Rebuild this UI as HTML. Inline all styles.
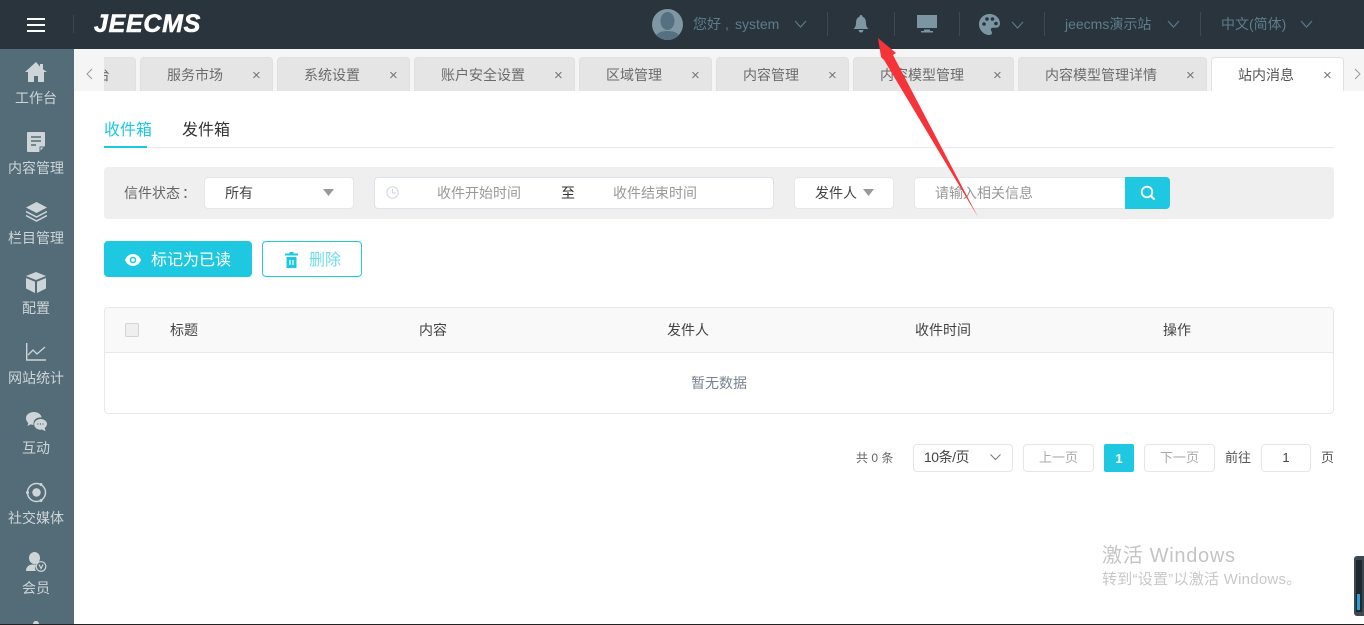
<!DOCTYPE html>
<html><head><meta charset="utf-8">
<style>
*{box-sizing:border-box;margin:0;padding:0}
html,body{width:1364px;height:625px;overflow:hidden;background:#fff}
body{font-family:"Liberation Sans","Noto Sans CJK SC",sans-serif;font-size:13px;color:#333;position:relative}
.a{position:absolute;white-space:nowrap}
.top{left:0;top:0;width:1364px;height:49px;background:#29343c}
.sep{position:absolute;top:12px;width:1px;height:24px;background:#3d4a53}
.ht{position:absolute;top:15px;line-height:18px;font-size:14px;color:#5f7d8c;white-space:nowrap}
.side{left:0;top:49px;width:74px;height:576px;background:#546c78}
.sl{position:absolute;left:0;width:72px;text-align:center;color:#cdd5d9;font-size:14px;line-height:16px;letter-spacing:0}
.tabbar{left:74px;top:49px;width:1290px;height:42px;background:#f5f5f5}
.tab{position:absolute;top:57px;height:34px;background:#e5e5e5;border:1px solid #e0e0e0;border-bottom:0;border-radius:4px 4px 0 0;font-size:14px;line-height:35px;color:#6b6b6b}
.tab span{position:absolute;left:0;top:0;white-space:nowrap}
.tab i{position:absolute;font-style:normal;top:0;font-size:15px;color:#777;line-height:36px}
.box{position:absolute;background:#fff;border:1px solid #e6e6e6;border-radius:4px}
.pl{color:#999;font-size:14px;line-height:18px}
.th{position:absolute;top:322px;font-size:14px;line-height:16px;color:#444;white-space:nowrap}
</style></head><body>
<div class="a top"></div>
<svg class="a" style="left:27px;top:17px" width="18" height="15"><path d="M0 2h18M0 8h18M0 14h18" stroke="#fff" stroke-width="2"/></svg>
<div class="a" style="left:73px;top:15px;width:1px;height:18px;background:#3a464e"></div>
<div class="a" style="left:94px;top:9px;font:italic bold 25px/30px 'Liberation Sans',sans-serif;color:#fff;letter-spacing:.7px;-webkit-text-stroke:.6px #fff">JEECMS</div>

<svg class="a" style="left:652px;top:9px" width="31" height="31"><defs><clipPath id="c"><circle cx="15.500" cy="15.500" r="15.500"/></clipPath></defs><circle cx="15.500" cy="15.500" r="15.500" fill="#7f97a3"/><g clip-path="url(#c)" fill="#557080"><ellipse cx="15.500" cy="12" rx="7" ry="9"/><path d="M3 31c0-7 6-9 12.500-9S28 24 28 31z"/></g></svg>
<div class="ht" style="left:693px">您好</div>
<div class="ht" style="left:725px">,</div>
<div class="ht" style="left:735px">system</div>
<svg class="a" style="left:794px;top:20px" width="13" height="9"><path d="M1 1l5.500 6L12 1" fill="none" stroke="#5f7d8c" stroke-width="1.100"/></svg>
<div class="sep" style="left:827px"></div>
<svg class="a" style="left:853px;top:15px" width="16" height="18"><path d="M8 0c1 0 1.500.7 1.500 1.700C12 2.500 13 5 13 8c0 3 1 4.500 2.500 6h-15C2 12.500 3 11 3 8c0-3 1-5.500 3.500-6.300C6.500.7 7 0 8 0zM5.500 15h5C10.300 16.500 9.300 17.500 8 17.500S5.700 16.500 5.500 15z" fill="#7f97a3"/></svg>
<div class="sep" style="left:894px"></div>
<svg class="a" style="left:917px;top:15px" width="21" height="18"><path d="M0 0h20v13H0zM7 14.500h6V16H7zM4 16h12v1.500H4z" fill="#7b95a2"/></svg>
<div class="sep" style="left:959px"></div>
<svg class="a" style="left:979px;top:14px" width="21" height="21"><path d="M10.500 0C4.700 0 0 4.500 0 10.200S4.700 21 10.500 21c1.800 0 2.500-1 2.500-2.200 0-1.600-1.200-2-1.200-3.300 0-1.200 1-1.800 2.200-1.800h3C19.500 13.700 21 12 21 9.500 21 4 16.300 0 10.500 0z" fill="#7b95a2"/><circle cx="5" cy="10" r="1.800" fill="#29343c"/><circle cx="8" cy="5" r="1.800" fill="#29343c"/><circle cx="13.500" cy="5" r="1.800" fill="#29343c"/><circle cx="17" cy="9.500" r="1.800" fill="#29343c"/></svg>
<svg class="a" style="left:1011px;top:21px" width="13" height="9"><path d="M1 1l5.500 6L12 1" fill="none" stroke="#5f7d8c" stroke-width="1.100"/></svg>
<div class="sep" style="left:1044px"></div>
<div class="ht" style="left:1065px">jeecms演示站</div>
<svg class="a" style="left:1167px;top:20px" width="13" height="9"><path d="M1 1l5.500 6L12 1" fill="none" stroke="#5f7d8c" stroke-width="1.100"/></svg>
<div class="sep" style="left:1200px"></div>
<div class="ht" style="left:1221px">中文(简体)</div>
<svg class="a" style="left:1300px;top:20px" width="13" height="9"><path d="M1 1l5.500 6L12 1" fill="none" stroke="#5f7d8c" stroke-width="1.100"/></svg>

<div class="a side"></div>
<svg class="a" style="left:25px;top:62px" width="22" height="20"><path d="M11 0L0 10h3v10h6v-6h4v6h6V10h3L18 7.300V2h-3v2.600z" fill="#cdd5d9"/></svg>
<div class="sl" style="top:90px">工作台</div>
<svg class="a" style="left:27px;top:132px" width="18" height="20"><path d="M1 0h16a1 1 0 011 1v13l-6 6H1a1 1 0 01-1-1V1a1 1 0 011-1z" fill="#cdd5d9"/><path d="M4 5h10M4 9h10M4 13h5" stroke="#546c78" stroke-width="1.600"/><path d="M13 20v-5h5" fill="none" stroke="#546c78"/></svg>
<div class="sl" style="top:160px">内容管理</div>
<svg class="a" style="left:26px;top:202px" width="21" height="20"><path d="M10.500 0L21 5.500 10.500 11 0 5.500z" fill="#cdd5d9"/><path d="M0 9.500l10.500 5.500L21 9.500M0 13.500l10.500 5.500L21 13.500" fill="none" stroke="#cdd5d9" stroke-width="1.500"/></svg>
<div class="sl" style="top:230px">栏目管理</div>
<svg class="a" style="left:26px;top:272px" width="20" height="21"><path d="M10 0l10 4-10 4L0 4z" fill="#cdd5d9"/><path d="M0 6l9 3.700V21L0 16.500zM20 6l-9 3.700V21l9-4.500z" fill="#cdd5d9"/></svg>
<div class="sl" style="top:300px">配置</div>
<svg class="a" style="left:26px;top:343px" width="20" height="18"><path d="M.7 0v17H20" fill="none" stroke="#cdd5d9" stroke-width="1.400"/><path d="M2 12l5-5 4 4 8-7" fill="none" stroke="#cdd5d9" stroke-width="1.300"/></svg>
<div class="sl" style="top:370px">网站统计</div>
<svg class="a" style="left:26px;top:412px" width="21" height="20"><path d="M8 0c4 0 7.500 2.500 7.500 5.500-3-.5-8 1-8 6 0 .5 0 1 .2 1.400-1 0-2-.2-3-.5L1.500 14l.8-3C.8 9.800 0 8 0 6c0-3.300 3.600-6 8-6z" fill="#cdd5d9"/><path d="M14.500 7c3.600 0 6.500 2.300 6.500 5 0 1.600-1 3-2.300 4l.8 3.200-3.500-1.700c-.5.100-1 .2-1.500.2-3.500 0-6.300-2.300-6.300-5.200S11 7 14.500 7z" fill="#cdd5d9"/><path d="M11.500 12h1M14 12h1M16.500 12h1" stroke="#546c78" stroke-width="1.200"/></svg>
<div class="sl" style="top:440px">互动</div>
<svg class="a" style="left:26px;top:482px" width="21" height="21"><circle cx="10.500" cy="10.500" r="9" fill="none" stroke="#cdd5d9" stroke-width="1.500"/><circle cx="10.500" cy="10.500" r="4.200" fill="#cdd5d9"/><circle cx="15" cy="2.500" r="1.500" fill="#cdd5d9"/><circle cx="1.500" cy="10.500" r="1.500" fill="#cdd5d9"/><circle cx="15" cy="18.500" r="1.500" fill="#cdd5d9"/></svg>
<div class="sl" style="top:510px">社交媒体</div>
<svg class="a" style="left:26px;top:552px" width="21" height="20"><ellipse cx="8.500" cy="6" rx="5.500" ry="6" fill="#cdd5d9"/><path d="M0 19c0-4 2.500-6 6-6.500h5c-2 1.500-2.500 4.500-1 6.500z" fill="#cdd5d9"/><circle cx="15" cy="14.500" r="4.800" fill="#546c78" stroke="#cdd5d9" stroke-width="1.200"/><path d="M13 12.500l2 4 2-4" fill="none" stroke="#cdd5d9" stroke-width="1.200"/></svg>
<div class="sl" style="top:580px">会员</div>
<svg class="a" style="left:30px;top:621px" width="12" height="4"><path d="M6 0c2 0 3 1 3 4H3c0-3 1-4 3-4z" fill="#cdd5d9"/></svg>

<div class="a tabbar"></div>
<div class="tab" style="left:104px;width:32px;overflow:hidden;border-left:0;border-radius:0 4px 0 0"><span style="left:-36px">工作台</span></div>
<svg class="a" style="left:86px;top:68px" width="7" height="12"><path d="M6 1L1 6l5 5" fill="none" stroke="#999"/></svg>
<div class="tab" style="left:140px;width:133px"><span style="left:26px">服务市场</span><i style="left:111px">×</i></div>
<div class="tab" style="left:277px;width:133px"><span style="left:26px">系统设置</span><i style="left:111px">×</i></div>
<div class="tab" style="left:414px;width:161px"><span style="left:26px">账户安全设置</span><i style="left:139px">×</i></div>
<div class="tab" style="left:579px;width:133px"><span style="left:26px">区域管理</span><i style="left:111px">×</i></div>
<div class="tab" style="left:716px;width:133px"><span style="left:26px">内容管理</span><i style="left:111px">×</i></div>
<div class="tab" style="left:853px;width:161px"><span style="left:26px">内容模型管理</span><i style="left:139px">×</i></div>
<div class="tab" style="left:1018px;width:189px"><span style="left:26px">内容模型管理详情</span><i style="left:167px">×</i></div>
<div class="tab" style="left:1211px;width:133px;background:#fff;color:#555"><span style="left:26px">站内消息</span><i style="left:111px">×</i></div>
<svg class="a" style="left:1354px;top:68px" width="7" height="12"><path d="M1 1l5 5-5 5" fill="none" stroke="#999"/></svg>

<div class="a" style="left:104px;top:121px;font-size:16px;line-height:20px;color:#1fc8e1">收件箱</div>
<div class="a" style="left:182px;top:121px;font-size:16px;line-height:20px;color:#333">发件箱</div>
<div class="a" style="left:104px;top:147px;width:1230px;height:1px;background:#e8e8e8"></div>
<div class="a" style="left:104px;top:146px;width:43px;height:2px;background:#1fc8e1"></div>

<div class="a" style="left:104px;top:167px;width:1230px;height:52px;background:#efefef;border-radius:4px"></div>
<div class="a" style="left:124px;top:184px;font-size:14px;line-height:18px;color:#666">信件状态</div>
<div class="a" style="left:182px;top:184px;font-size:14px;line-height:18px;color:#666">：</div>
<div class="box" style="left:204px;top:177px;width:150px;height:32px"></div>
<div class="a" style="left:225px;top:184px;font-size:14px;line-height:18px;color:#444">所有</div>
<svg class="a" style="left:323px;top:189px" width="11" height="7"><path d="M0 0h11L5.500 7z" fill="#999"/></svg>
<div class="box" style="left:374px;top:177px;width:400px;height:32px;border-color:#dfe2ea"></div>
<svg class="a" style="left:386px;top:186px" width="13" height="13"><circle cx="6.500" cy="6.500" r="5.700" fill="none" stroke="#d0d6e2"/><path d="M6.500 3v4H10" fill="none" stroke="#d0d6e2"/></svg>
<div class="a pl" style="left:437px;top:184px">收件开始时间</div>
<div class="a" style="left:561px;top:184px;font-size:14px;line-height:18px;color:#333">至</div>
<div class="a pl" style="left:613px;top:184px">收件结束时间</div>
<div class="box" style="left:794px;top:177px;width:100px;height:32px"></div>
<div class="a" style="left:815px;top:184px;font-size:14px;line-height:18px;color:#444">发件人</div>
<svg class="a" style="left:863px;top:189px" width="11" height="7"><path d="M0 0h11L5.500 7z" fill="#999"/></svg>
<div class="box" style="left:914px;top:177px;width:212px;height:32px;border-radius:4px 0 0 4px"></div>
<div class="a pl" style="left:935px;top:184px;font-size:14px">请输入相关信息</div>
<div class="a" style="left:1125px;top:177px;width:45px;height:32px;background:#1fc8e1;border-radius:0 4px 4px 0"></div>
<svg class="a" style="left:1140px;top:185px" width="16" height="16"><circle cx="7" cy="7" r="5.300" fill="none" stroke="#fff" stroke-width="1.800"/><path d="M11 11l3.500 3.500" stroke="#fff" stroke-width="2"/></svg>

<div class="a" style="left:104px;top:241px;width:148px;height:36px;background:#1fc8e1;border-radius:4px"></div>
<svg class="a" style="left:125px;top:254px" width="16" height="12"><path d="M8 0c3.700 0 6.600 2.500 8 6-1.400 3.500-4.300 6-8 6s-6.600-2.500-8-6c1.400-3.500 4.300-6 8-6z" fill="#fff"/><circle cx="8" cy="6" r="3.300" fill="#1fc8e1"/><circle cx="8" cy="6" r="1.800" fill="#fff"/></svg>
<div class="a" style="left:151px;top:251px;font-size:16px;line-height:20px;color:#fff">标记为已读</div>
<div class="a" style="left:262px;top:241px;width:100px;height:36px;background:#fff;border:1px solid #1fc8e1;border-radius:4px"></div>
<svg class="a" style="left:285px;top:252px" width="13" height="17"><path d="M4.500 0h4v1.500H13V3.500H0V1.500h4.500zM1.500 5h10v11h-10z" fill="#1fc8e1"/><path d="M5 8v5M8 8v5" stroke="#fff" stroke-width="1.200"/></svg>
<div class="a" style="left:309px;top:251px;font-size:16px;line-height:20px;color:#6fdcec">删除</div>

<div class="box" style="left:104px;top:307px;width:1230px;height:107px;border-color:#e8e8e8"></div>
<div class="a" style="left:105px;top:308px;width:1228px;height:45px;background:#f9f9f9;border-bottom:1px solid #e8e8e8;border-radius:4px 4px 0 0"></div>
<div class="a" style="left:125px;top:323px;width:14px;height:14px;background:#efefef;border:1px solid #d4d4d4;border-radius:2px"></div>
<div class="th" style="left:170px">标题</div>
<div class="th" style="left:419px">内容</div>
<div class="th" style="left:667px">发件人</div>
<div class="th" style="left:915px">收件时间</div>
<div class="th" style="left:1163px">操作</div>
<div class="a" style="left:691px;top:375px;font-size:14px;line-height:16px;color:#78838f">暂无数据</div>

<div class="a" style="left:856px;top:450px;font-size:12px;line-height:16px;color:#666">共 0 条</div>
<div class="box" style="left:913px;top:444px;width:100px;height:28px"></div>
<div class="a" style="left:924px;top:449px;font-size:14px;line-height:17px;letter-spacing:-.5px;color:#444">10条/页</div>
<svg class="a" style="left:990px;top:454px" width="11" height="7"><path d="M.5.500l5 5 5-5" fill="none" stroke="#777"/></svg>
<div class="box" style="left:1023px;top:444px;width:71px;height:28px"></div>
<div class="a" style="left:1039px;top:450px;line-height:16px;color:#aaa">上一页</div>
<div class="a" style="left:1104px;top:444px;width:30px;height:28px;background:#1fc8e1;border-radius:2px;color:#fff;font-weight:bold;font-size:13px;line-height:30px;text-align:center">1</div>
<div class="box" style="left:1144px;top:444px;width:71px;height:28px"></div>
<div class="a" style="left:1160px;top:450px;line-height:16px;color:#aaa">下一页</div>
<div class="a" style="left:1225px;top:450px;line-height:16px;color:#555">前往</div>
<div class="box" style="left:1261px;top:444px;width:50px;height:28px"></div>
<div class="a" style="left:1261px;top:450px;width:50px;text-align:center;line-height:16px;color:#444">1</div>
<div class="a" style="left:1321px;top:450px;line-height:16px;color:#555">页</div>

<div class="a" style="left:1102px;top:543px;font-size:20px;line-height:26px;letter-spacing:.7px;color:#c4c4c4">激活 Windows</div>
<div class="a" style="left:1102px;top:570px;font-size:15px;line-height:19px;letter-spacing:.25px;color:#c8c8c8">转到“设置”以激活 Windows。</div>

<div class="a" style="left:1354px;top:556px;width:10px;height:60px;background:#3d4850;border-radius:3px 0 0 3px"></div>
<div class="a" style="left:1356px;top:560px;width:6px;height:52px;background:#1f272d"></div>
<div class="a" style="left:1357px;top:594px;width:3px;height:16px;background:#2a9fd8"></div>
<div class="a" style="left:0;top:624px;width:1364px;height:1px;background:#222"></div>

<svg class="a" style="left:0;top:0;pointer-events:none" width="1364" height="625"><path d="M878 38L896 53 893 55 978 217 884 60 881 57z" fill="#f5343a"/></svg>
</body></html>
